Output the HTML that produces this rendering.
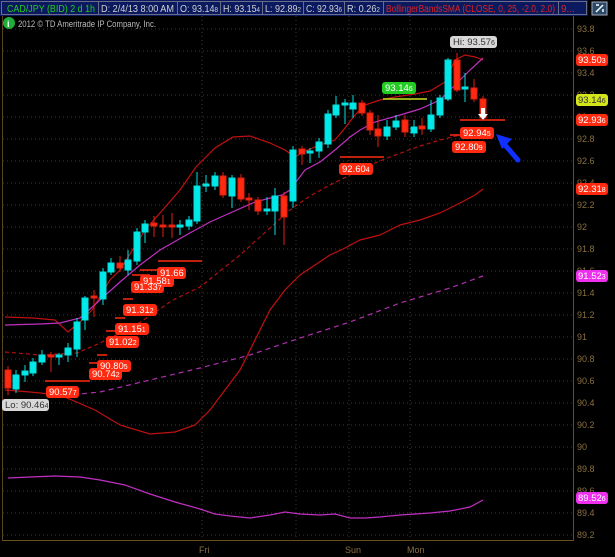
<!DOCTYPE html>
<html><head><meta charset="utf-8"><style>
body{margin:0;background:#000;width:615px;height:557px;overflow:hidden;font-family:"Liberation Sans",sans-serif}
svg{display:block}
</style></head><body>
<svg width="615" height="557" xmlns="http://www.w3.org/2000/svg" font-family="Liberation Sans, sans-serif">
<rect width="615" height="557" fill="#000"/>
<!-- header -->
<rect x="0" y="0" width="588" height="16" fill="#0b1a5e"/>
<g stroke="#6b6b8a" stroke-width="1" fill="none">
<rect x="1.5" y="1.5" width="97" height="13"/>
<rect x="98.5" y="1.5" width="79" height="13"/>
<rect x="177.5" y="1.5" width="43" height="13"/>
<rect x="220.5" y="1.5" width="42" height="13"/>
<rect x="262.5" y="1.5" width="41" height="13"/>
<rect x="303.5" y="1.5" width="41" height="13"/>
<rect x="344.5" y="1.5" width="39" height="13"/>
<rect x="383.5" y="1.5" width="175" height="13"/>
<rect x="558.5" y="1.5" width="28" height="13"/>
</g>
<g font-size="10" fill="#d0d0d0">
<text x="7" y="12" fill="#22cc22" textLength="88" lengthAdjust="spacingAndGlyphs">CAD/JPY (BID) 2 d 1h</text>
<text x="101" y="12" textLength="73" lengthAdjust="spacingAndGlyphs">D: 2/4/13 8:00 AM</text>
<text x="180" y="12" textLength="38" lengthAdjust="spacingAndGlyphs">O: 93.14<tspan font-size="7">8</tspan></text>
<text x="223" y="12" textLength="37" lengthAdjust="spacingAndGlyphs">H: 93.15<tspan font-size="7">4</tspan></text>
<text x="265" y="12" textLength="36" lengthAdjust="spacingAndGlyphs">L: 92.89<tspan font-size="7">2</tspan></text>
<text x="306" y="12" textLength="36" lengthAdjust="spacingAndGlyphs">C: 92.93<tspan font-size="7">6</tspan></text>
<text x="347" y="12" textLength="33" lengthAdjust="spacingAndGlyphs">R: 0.26<tspan font-size="7">2</tspan></text>
<text x="386" y="12" fill="#e02020" textLength="169" lengthAdjust="spacingAndGlyphs">BollingerBandsSMA (CLOSE, 0, 25, -2.0, 2.0)</text>
<text x="561" y="12" fill="#e02020">9...</text>
</g>
<rect x="592" y="2" width="15" height="13" fill="#2a4a6a" stroke="#aab" stroke-width="1"/>
<path d="M596 12 L603 5 M596 5 H599 M603 12 V9" stroke="#fff" stroke-width="1.5"/>
<circle cx="9" cy="23" r="6" fill="#1fae3a"/>
<text x="7" y="27" font-size="9" fill="#fff" font-weight="bold">i</text>
<text x="18" y="27" font-size="9" fill="#bbb" textLength="138" lengthAdjust="spacingAndGlyphs">2012 © TD Ameritrade IP Company, Inc.</text>
<!-- axes -->
<line x1="2.5" y1="16" x2="2.5" y2="540" stroke="#5a4420"/>
<line x1="573.5" y1="16" x2="573.5" y2="540" stroke="#6a5020"/>
<line x1="2" y1="540.5" x2="574" y2="540.5" stroke="#6a5020"/>
<g stroke="#4a3818" stroke-dasharray="1 3">
<line x1="3" x2="573" y1="29" y2="29"/><line x1="3" x2="573" y1="51" y2="51"/><line x1="3" x2="573" y1="73" y2="73"/><line x1="3" x2="573" y1="95" y2="95"/><line x1="3" x2="573" y1="117" y2="117"/><line x1="3" x2="573" y1="139" y2="139"/><line x1="3" x2="573" y1="161" y2="161"/><line x1="3" x2="573" y1="183" y2="183"/><line x1="3" x2="573" y1="205" y2="205"/><line x1="3" x2="573" y1="227" y2="227"/><line x1="3" x2="573" y1="249" y2="249"/><line x1="3" x2="573" y1="271" y2="271"/><line x1="3" x2="573" y1="293" y2="293"/><line x1="3" x2="573" y1="315" y2="315"/><line x1="3" x2="573" y1="337" y2="337"/><line x1="3" x2="573" y1="359" y2="359"/><line x1="3" x2="573" y1="381" y2="381"/><line x1="3" x2="573" y1="403" y2="403"/><line x1="3" x2="573" y1="425" y2="425"/><line x1="3" x2="573" y1="447" y2="447"/><line x1="3" x2="573" y1="469" y2="469"/><line x1="3" x2="573" y1="491" y2="491"/><line x1="3" x2="573" y1="513" y2="513"/><line x1="3" x2="573" y1="535" y2="535"/>
<line x1="202" x2="202" y1="16" y2="540"/><line x1="296" x2="296" y1="16" y2="540"/><line x1="349" x2="349" y1="16" y2="540"/><line x1="410" x2="410" y1="16" y2="540"/>
</g>
<g font-size="9" fill="#8a7040">
<text x="577" y="32">93.8</text><text x="577" y="54">93.6</text><text x="577" y="76">93.4</text><text x="577" y="98">93.2</text><text x="577" y="120">93</text><text x="577" y="142">92.8</text><text x="577" y="164">92.6</text><text x="577" y="186">92.4</text><text x="577" y="208">92.2</text><text x="577" y="230">92</text><text x="577" y="252">91.8</text><text x="577" y="274">91.6</text><text x="577" y="296">91.4</text><text x="577" y="318">91.2</text><text x="577" y="340">91</text><text x="577" y="362">90.8</text><text x="577" y="384">90.6</text><text x="577" y="406">90.4</text><text x="577" y="428">90.2</text><text x="577" y="450">90</text><text x="577" y="472">89.8</text><text x="577" y="494">89.6</text><text x="577" y="516">89.4</text><text x="577" y="538">89.2</text>
<text x="199" y="553">Fri</text><text x="345" y="553">Sun</text><text x="407" y="553">Mon</text>
</g>
<!-- indicator lines -->
<g fill="none" stroke-width="1.2">
<polyline stroke="#c01010" points="5,317 33,318 55,320 68,332 80,322 92,310 110,280 120,270 145,230 160,213 180,190 196,167 215,148 233,137 250,136 270,143 285,150 295,157 305,151 320,145 335,140 345,128 355,115 365,105 380,100 395,97 415,94 430,91 445,82 455,60 465,55 475,57 483,60"/>
<polyline stroke="#c01010" points="5,390 30,392 60,395 95,410 120,425 150,434 175,432 195,425 210,410 225,390 240,370 255,340 270,310 285,290 300,275 315,265 330,255 345,248 360,240 380,235 400,225 420,220 440,213 460,203 475,195 483,189"/>
<polyline stroke="#b01010" stroke-dasharray="4 3" points="5,352 40,355 77,353 100,343 133,327 173,300 200,287 240,255 270,228 290,210 310,196 330,185 350,175 370,165 390,157 420,146 440,140 460,135 483,130"/>
<polyline stroke="#c030c0" points="5,325 40,324 60,323 80,318 100,300 120,282 140,265 160,250 188,234 210,222 230,213 255,202 282,195 290,190 305,170 320,162 335,150 350,137 360,130 375,122 400,115 420,109 440,100 455,85 470,70 483,58"/>
<polyline stroke="#b030b0" stroke-dasharray="5 4" points="55,395 80,394 100,392 150,380 200,368 250,355 300,338 350,322 400,303 450,288 483,276"/>
<polyline stroke="#c030c0" points="8,478 30,477 55,476 80,477 100,480 125,485 150,494 175,502 200,509 215,514 230,516 250,518 270,515 285,512 300,514 320,515 335,514 350,518 365,518 380,517 400,515 415,514 430,513 450,511 470,507 483,500"/>
</g>
<g>
<g stroke="#00e0e0" fill="#00e8e8">
<line x1="16" y1="370" x2="16" y2="393"/><rect x="13" y="375" width="6" height="14"/>
<line x1="25" y1="365" x2="25" y2="382"/><rect x="22" y="371" width="6" height="4"/>
<line x1="33" y1="358" x2="33" y2="376"/><rect x="30" y="362" width="6" height="11"/>
<line x1="42" y1="350" x2="42" y2="365"/><rect x="39" y="355" width="6" height="7"/>
<line x1="59" y1="353" x2="59" y2="365"/><rect x="56" y="355" width="6" height="2"/>
<line x1="68" y1="343" x2="68" y2="362"/><rect x="65" y="348" width="6" height="7"/>
<line x1="77" y1="318" x2="77" y2="357"/><rect x="74" y="322" width="6" height="27"/>
<line x1="85" y1="296" x2="85" y2="330"/><rect x="82" y="298" width="6" height="22"/>
<line x1="103" y1="268" x2="103" y2="305"/><rect x="100" y="272" width="6" height="27"/>
<line x1="111" y1="258" x2="111" y2="275"/><rect x="108" y="263" width="6" height="9"/>
<line x1="128" y1="250" x2="128" y2="275"/><rect x="125" y="260" width="6" height="10"/>
<line x1="137" y1="228" x2="137" y2="265"/><rect x="134" y="232" width="6" height="29"/>
<line x1="145" y1="220" x2="145" y2="243"/><rect x="142" y="224" width="6" height="8"/>
<line x1="180" y1="220" x2="180" y2="235"/><rect x="177" y="225" width="6" height="2"/>
<line x1="189" y1="216" x2="189" y2="230"/><rect x="186" y="220" width="6" height="6"/>
<line x1="197" y1="172" x2="197" y2="224"/><rect x="194" y="186" width="6" height="35"/>
<line x1="206" y1="175" x2="206" y2="192"/><rect x="203" y="184" width="6" height="2"/>
<line x1="215" y1="172" x2="215" y2="190"/><rect x="212" y="176" width="6" height="10"/>
<line x1="232" y1="175" x2="232" y2="208"/><rect x="229" y="178" width="6" height="18"/>
<line x1="267" y1="197" x2="267" y2="215"/><rect x="264" y="209" width="6" height="2"/>
<line x1="275" y1="188" x2="275" y2="235"/><rect x="272" y="196" width="6" height="15"/>
<line x1="293" y1="146" x2="293" y2="208"/><rect x="290" y="150" width="6" height="51"/>
<line x1="310" y1="148" x2="310" y2="163"/><rect x="307" y="151" width="6" height="2"/>
<line x1="319" y1="138" x2="319" y2="158"/><rect x="316" y="142" width="6" height="9"/>
<line x1="328" y1="110" x2="328" y2="148"/><rect x="325" y="114" width="6" height="30"/>
<line x1="336" y1="96" x2="336" y2="118"/><rect x="333" y="105" width="6" height="10"/>
<line x1="345" y1="99" x2="345" y2="124"/><rect x="342" y="103" width="6" height="2"/>
<line x1="353" y1="95" x2="353" y2="118"/><rect x="350" y="103" width="6" height="6"/>
<line x1="387" y1="120" x2="387" y2="140"/><rect x="384" y="127" width="6" height="9"/>
<line x1="396" y1="115" x2="396" y2="130"/><rect x="393" y="121" width="6" height="6"/>
<line x1="414" y1="120" x2="414" y2="137"/><rect x="411" y="127" width="6" height="6"/>
<line x1="431" y1="100" x2="431" y2="132"/><rect x="428" y="115" width="6" height="14"/>
<line x1="440" y1="95" x2="440" y2="118"/><rect x="437" y="98" width="6" height="17"/>
<line x1="448" y1="58" x2="448" y2="101"/><rect x="445" y="60" width="6" height="39"/>
<line x1="465" y1="73" x2="465" y2="102"/><rect x="462" y="87" width="6" height="2"/>
</g>
<g stroke="#e02010" fill="#ff2a10">
<line x1="8" y1="366" x2="8" y2="395"/><rect x="5" y="370" width="6" height="18"/>
<line x1="51" y1="352" x2="51" y2="372"/><rect x="48" y="355" width="6" height="2"/>
<line x1="94" y1="290" x2="94" y2="317"/><rect x="91" y="296" width="6" height="2"/>
<line x1="120" y1="256" x2="120" y2="272"/><rect x="117" y="263" width="6" height="5"/>
<line x1="154" y1="216" x2="154" y2="237"/><rect x="151" y="223" width="6" height="3"/>
<line x1="163" y1="215" x2="163" y2="237"/><rect x="160" y="225" width="6" height="2"/>
<line x1="172" y1="213" x2="172" y2="238"/><rect x="169" y="225" width="6" height="2"/>
<line x1="223" y1="172" x2="223" y2="198"/><rect x="220" y="176" width="6" height="19"/>
<line x1="241" y1="174" x2="241" y2="202"/><rect x="238" y="178" width="6" height="21"/>
<line x1="249" y1="193" x2="249" y2="210"/><rect x="246" y="198" width="6" height="2"/>
<line x1="258" y1="197" x2="258" y2="215"/><rect x="255" y="200" width="6" height="11"/>
<line x1="284" y1="192" x2="284" y2="245"/><rect x="281" y="196" width="6" height="21"/>
<line x1="302" y1="146" x2="302" y2="165"/><rect x="299" y="149" width="6" height="5"/>
<line x1="362" y1="100" x2="362" y2="116"/><rect x="359" y="103" width="6" height="10"/>
<line x1="370" y1="110" x2="370" y2="135"/><rect x="367" y="113" width="6" height="17"/>
<line x1="378" y1="115" x2="378" y2="147"/><rect x="375" y="129" width="6" height="7"/>
<line x1="405" y1="115" x2="405" y2="137"/><rect x="402" y="120" width="6" height="12"/>
<line x1="422" y1="118" x2="422" y2="135"/><rect x="419" y="126" width="6" height="3"/>
<line x1="457" y1="53" x2="457" y2="92"/><rect x="454" y="60" width="6" height="30"/>
<line x1="474" y1="79" x2="474" y2="102"/><rect x="471" y="88" width="6" height="11"/>
<line x1="483" y1="96" x2="483" y2="120"/><rect x="480" y="99" width="6" height="19"/>
</g>
</g>
<path d="M481 108 H485 V114 H488 L483 120 L478 114 H481Z" fill="#fff"/>
<g stroke="#ff2a10" stroke-width="1.5">
<line x1="460" y1="120" x2="505" y2="120"/>
<line x1="340" y1="157" x2="384" y2="157"/>
<line x1="45" y1="381" x2="90" y2="381"/>
<line x1="158" y1="261" x2="202" y2="261"/>
<line x1="140" y1="270" x2="165" y2="270"/>
<line x1="132" y1="275" x2="150" y2="275"/>
<line x1="123" y1="299" x2="133" y2="299"/>
<line x1="115" y1="318" x2="125" y2="318"/>
<line x1="106" y1="331" x2="118" y2="331"/>
<line x1="97" y1="355" x2="107" y2="355"/>
<line x1="89" y1="363" x2="100" y2="363"/>
<line x1="450" y1="135" x2="460" y2="135"/>
</g>
<line x1="383" y1="99" x2="427" y2="99" stroke="#c8e020" stroke-width="1.5"/>
<g font-size="9.5" fill="#fff">
<rect x="450" y="36" width="47" height="12" rx="3" fill="#d8d8d8"/><text x="453" y="45" fill="#333">Hi: 93.57<tspan font-size="7">6</tspan></text>
<rect x="2" y="399" width="47" height="12" rx="3" fill="#d8d8d8"/><text x="5" y="408" fill="#333">Lo: 90.46<tspan font-size="7">4</tspan></text>
<rect x="382" y="82" width="34" height="12" rx="3" fill="#22cc22"/><text x="385" y="91" fill="#fff">93.14<tspan font-size="7">6</tspan></text>
<g fill="#ff2a10">
<rect x="460" y="127" width="34" height="12" rx="3"/><rect x="452" y="141" width="34" height="12" rx="3"/><rect x="339" y="163" width="34" height="12" rx="3"/>
<rect x="157" y="267" width="29" height="12" rx="3"/><rect x="131" y="281" width="33" height="12" rx="3"/><rect x="140" y="275" width="34" height="12" rx="3"/>
<rect x="123" y="304" width="34" height="12" rx="3"/><rect x="115" y="323" width="34" height="12" rx="3"/><rect x="106" y="336" width="33" height="12" rx="3"/>
<rect x="97" y="360" width="34" height="12" rx="3"/><rect x="89" y="368" width="33" height="12" rx="3"/><rect x="46" y="386" width="33" height="12" rx="3"/>
<rect x="576" y="54" width="32" height="12" rx="3"/><rect x="576" y="114" width="32" height="12" rx="3"/><rect x="576" y="183" width="32" height="12" rx="3"/>
</g>
<rect x="576" y="94" width="32" height="12" rx="3" fill="#d4e61a"/>
<rect x="576" y="270" width="32" height="12" rx="3" fill="#ee30ee"/>
<rect x="576" y="492" width="32" height="12" rx="3" fill="#ee30ee"/>
<text x="463" y="136">92.94<tspan font-size="7">5</tspan></text>
<text x="455" y="150">92.80<tspan font-size="7">9</tspan></text>
<text x="342" y="172">92.60<tspan font-size="7">4</tspan></text>
<text x="160" y="276">91.66</text>
<text x="134" y="290">91.33<tspan font-size="7">7</tspan></text>
<text x="143" y="284">91.58<tspan font-size="7">1</tspan></text>
<text x="126" y="313">91.31<tspan font-size="7">2</tspan></text>
<text x="118" y="332">91.15<tspan font-size="7">1</tspan></text>
<text x="109" y="345">91.02<tspan font-size="7">2</tspan></text>
<text x="100" y="369">90.80<tspan font-size="7">5</tspan></text>
<text x="92" y="377">90.74<tspan font-size="7">2</tspan></text>
<text x="49" y="395">90.57<tspan font-size="7">7</tspan></text>
<text x="578" y="63">93.50<tspan font-size="7">3</tspan></text>
<text x="578" y="103" fill="#333">93.14<tspan font-size="7">6</tspan></text>
<text x="578" y="123">92.93<tspan font-size="7">6</tspan></text>
<text x="578" y="192">92.31<tspan font-size="7">8</tspan></text>
<text x="578" y="279">91.52<tspan font-size="7">3</tspan></text>
<text x="578" y="501">89.52<tspan font-size="7">6</tspan></text>
</g>
<path d="M518 160 L505 145" stroke="#1030ff" stroke-width="5" stroke-linecap="round"/>
<path d="M496 134 L512 139 L502 149 Z" fill="#1030ff"/>
</svg>
</body></html>
